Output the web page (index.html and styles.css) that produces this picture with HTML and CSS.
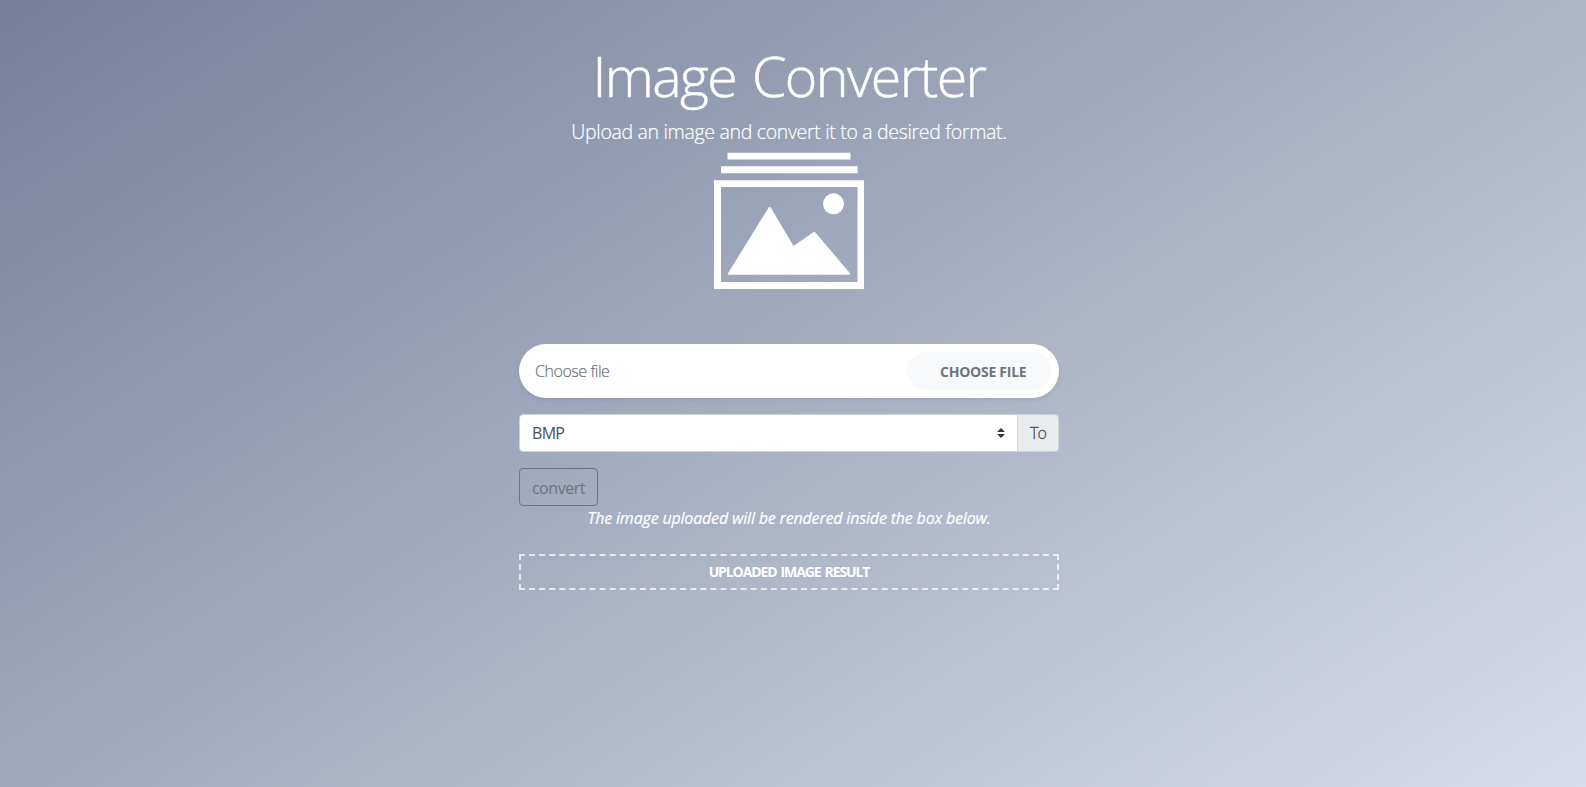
FILE: index.html
```html
<!DOCTYPE html>
<html lang="en">
<head>
<meta charset="utf-8">
<title>Image Converter</title>
<link rel="stylesheet" href="styles.css">
</head>
<body>
<main class="container">
  <header class="intro">
    <h1 class="title"><span>Image Converter</span></h1>
    <p class="lead"><span>Upload an image and convert it to a desired format.</span></p>
    <svg class="hero" viewBox="0 0 150 137" fill="#fff" aria-hidden="true">
      <path d="M13.500 .8h123v6.700h-123zM7 14.300h136.500v7H7z"/>
      <path fill-rule="evenodd" d="M0 28.200h150V137H0zM7 35v95h136.500V35z"/>
      <path d="M14 121.300 54.500 55.800q1.200-1.800 2.400 0L79.500 94 99.300 80.300q1.200-.8 2.300.4L136 121.300q.5 1.500-1 1.500H15q-1.500 0-1-1.500z"/>
      <circle cx="119.500" cy="51.800" r="10.500"/>
    </svg>
  </header>
  <section class="form">
    <div class="upload">
      <label class="file-name">Choose file</label>
      <label class="file-button"><span>CHOOSE FILE</span></label>
    </div>
    <div class="format">
      <div class="select"><span>BMP</span>
        <svg class="arrows" viewBox="0 0 4 5"><path fill="#343a40" d="M2 0 0 2h4zm0 5L0 3h4z"/></svg>
      </div>
      <div class="addon">To</div>
    </div>
    <button class="convert">convert</button>
    <p class="note"><span>The image uploaded will be rendered inside the box below.</span></p>
    <div class="result"><span>UPLOADED IMAGE RESULT</span></div>
  </section>
</main>
</body>
</html>
```
FILE: styles.css
```css
* { box-sizing: border-box; }
body {
  margin: 0;
  min-height: 100vh;
  padding-right: 8px;
  font: 300 16px/24px "Open Sans", "Noto Sans", sans-serif;
  color: #fff;
  background: linear-gradient(147deg, #757f9a 0%, #d7dde8 100%);
}
.container { width: 540px; margin: 0 auto; padding-top: 42px; }
.intro { display: flex; flex-direction: column; align-items: center; height: 302px; }
.title { margin: 0 0 8px; font-size: 55.500px; line-height: 67px; font-weight: 300; letter-spacing: -1.6px; word-spacing: 3px; white-space: nowrap; -webkit-text-stroke: .5px #fff; }
.lead { margin: 0; height: 35px; font-size: 19.500px; line-height: 30px; letter-spacing: -.32px; white-space: nowrap; -webkit-text-stroke: .2px #fff; }
.hero { display: block; width: 150px; height: 137px; }
.upload {
  display: flex; align-items: center; justify-content: space-between;
  height: 54px; padding: 0 8px 0 16px; margin-bottom: 16px;
  border-radius: 27px; background: #fff;
  box-shadow: 0 2px 4px rgba(0,0,0,.075);
}
.file-name { color: #6c757d; letter-spacing: -.45px; line-height: 26px; -webkit-text-stroke: .2px #6c757d; }
.file-button {
  width: 144px; height: 38px; padding-left: 33px; border-radius: 19px;
  background: #f8f9fa; color: #6c757d; font-size: 14px; line-height: 39px; font-weight: 700; letter-spacing: -.25px; white-space: nowrap;
}
.format { display: flex; height: 38px; margin-bottom: 16px; border: 1px solid #ced4da; border-radius: 4px; overflow: hidden; }
.select { flex: 1; display: flex; align-items: center; justify-content: space-between; padding: 0 12px; background: #fff; color: #495057; font-weight: 400; letter-spacing: -.7px; }
.arrows { width: 8px; height: 10px; }
.addon { width: 41px; border-left: 1px solid #ced4da; background: #e9ecef; color: #495057; line-height: 37px; text-align: center; letter-spacing: -.8px; -webkit-text-stroke: .3px #495057; }
.convert {
  display: block; width: 79px; height: 38px; padding: 0; border: 1px solid #6c757d; border-radius: 4px;
  background: transparent; color: #6c757d; font: 400 16px/38px "Open Sans", sans-serif; letter-spacing: -.45px;
}
.note { margin: 0 0 24px; font-style: italic; font-weight: 400; text-align: center; letter-spacing: -.18px; white-space: nowrap; -webkit-text-stroke: .2px #fff; }
.result { height: 36px; border: 2px dashed rgba(255,255,255,.7); text-align: center; font-size: 14px; line-height: 32px; font-weight: 700; letter-spacing: -1.1px; word-spacing: 1.5px; }
```
